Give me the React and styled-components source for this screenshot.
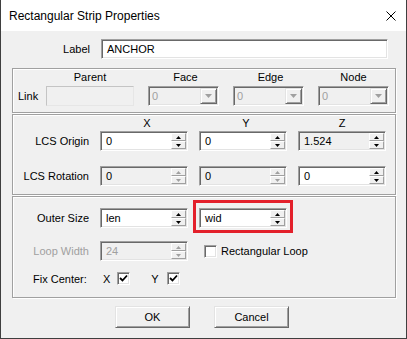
import React from "react";
import styled, { createGlobalStyle } from "styled-components";

const GlobalStyle = createGlobalStyle`
  html, body { margin: 0; padding: 0; background: #ffffff; }
  body { font-family: "Liberation Sans", Arial, sans-serif; font-size: 11px; color: #000; }
  * { box-sizing: border-box; }
`;

const Window = styled.div`
  width: 407px;
  height: 339px;
  border: 1px solid #3f3f3f;
  border-top: 0;
  background: #f0f0f0;
  display: flex;
  flex-direction: column;
`;

const TitleBar = styled.div`
  height: 31px;
  flex-shrink: 0;
  background: #ffffff;
  display: flex;
  align-items: center;
  justify-content: space-between;
  padding: 0 10px 0 8px;
  font-size: 12px;
`;

const Body = styled.div`
  padding: 8px 10px 0 11px;
  display: flex;
  flex-direction: column;
`;

const Row = styled.div`
  display: flex;
  align-items: center;
  margin-top: ${(p) => p.$mt || 0}px;
  padding-left: ${(p) => p.$pl || 0}px;
`;

const Caption = styled.div`
  width: ${(p) => p.$w}px;
  flex-shrink: 0;
  text-align: right;
  margin-right: ${(p) => p.$mr || 0}px;
  color: ${(p) => (p.$disabled ? "#a0a0a0" : "#000")};
  white-space: nowrap;
`;

const Sunken = styled.div`
  width: ${(p) => p.$w}px;
  height: 20px;
  flex-shrink: 0;
  border: 1px solid;
  border-color: #a0a0a0 #ffffff #ffffff #a0a0a0;
  box-shadow: inset 1px 1px 0 #696969, inset -1px -1px 0 #e3e3e3;
  background: ${(p) => (p.$gray ? "#f0f0f0" : "#ffffff")};
  color: ${(p) => (p.$dim ? "#a0a0a0" : "#000")};
  display: flex;
  align-items: stretch;
  padding: 1px;
`;

const Value = styled.div`
  flex: 1;
  display: flex;
  align-items: center;
  padding-left: ${(p) => p.$pl || 4}px;
  white-space: nowrap;
  overflow: hidden;
`;

const SpinCol = styled.div`
  width: 15px;
  display: flex;
  flex-direction: column;
`;

const SpinBtn = styled.div`
  height: 8px;
  background: #f0f0f0;
  border: 1px solid;
  border-color: #ffffff #a0a0a0 #a0a0a0 #ffffff;
  display: flex;
  align-items: center;
  justify-content: center;
`;

const DropBtn = styled.div`
  width: 17px;
  background: #f0f0f0;
  border: 1px solid;
  border-color: #e3e3e3 #696969 #696969 #e3e3e3;
  box-shadow: inset 1px 1px 0 #ffffff, inset -1px -1px 0 #a0a0a0;
  display: flex;
  align-items: center;
  justify-content: center;
`;

const FlatBox = styled.div`
  width: ${(p) => p.$w}px;
  height: 20px;
  border: 1px solid;
  border-color: #c4c4c4 #e6e6e6 #e6e6e6 #c4c4c4;
  background: #f0f0f0;
`;

const Group = styled.div`
  border: 1px solid #a0a0a0;
  box-shadow: inset 1px 1px 0 #ffffff, 1px 1px 0 #ffffff;
  margin-top: ${(p) => p.$mt || 0}px;
  padding: ${(p) => p.$pad};
  display: flex;
  flex-direction: column;
`;

const LinkRow = styled.div`
  display: flex;
  align-items: flex-end;
  padding-left: 5px;
`;

const LinkLabel = styled.div`
  width: 28px;
  line-height: 20px;
`;

const Field = styled.div`
  display: flex;
  flex-direction: column;
  align-items: center;
  gap: 2px;
  margin-left: ${(p) => p.$ml || 0}px;
`;

const Header = styled.div`
  line-height: 13px;
  text-align: center;
  padding-left: ${(p) => p.$shift || 0}px;
`;

const Grid = styled.div`
  display: grid;
  grid-template-columns: 76px 88px 88px 88px;
  column-gap: 11px;
  align-items: center;
  margin-top: ${(p) => p.$mt || 0}px;
`;

const CheckWrap = styled.label`
  display: inline-flex;
  align-items: center;
  gap: ${(p) => p.$gap || 4}px;
  margin-left: ${(p) => p.$ml || 0}px;
  white-space: nowrap;
`;

const Box = styled.span`
  width: 13px;
  height: 13px;
  flex-shrink: 0;
  border: 1px solid;
  border-color: #a0a0a0 #ffffff #ffffff #a0a0a0;
  box-shadow: inset 1px 1px 0 #696969, inset -1px -1px 0 #e3e3e3;
  background: #ffffff;
  display: flex;
  align-items: center;
  justify-content: center;
`;

const FixLabel = styled.div`
  width: 70px;
`;

const Highlight = styled.div`
  position: relative;
`;

const RedFrame = styled.div`
  position: absolute;
  top: -8px;
  left: -6px;
  right: -6px;
  bottom: -5px;
  border: 3px solid #e3202b;
  pointer-events: none;
`;

const ButtonRow = styled.div`
  display: flex;
  justify-content: center;
  gap: 24px;
  margin-top: 8px;
  padding-right: 4px;
`;

const Button = styled.div`
  width: 75px;
  height: 22px;
  background: #f0f0f0;
  border: 1px solid;
  border-color: #e3e3e3 #696969 #696969 #e3e3e3;
  box-shadow: inset 1px 1px 0 #ffffff, inset -1px -1px 0 #a0a0a0;
  display: flex;
  align-items: center;
  justify-content: center;
`;

const Tri = ({ up, color }) => (
  <svg width="5" height="3" viewBox="0 0 5 3">
    <polygon points={up ? "2.5,0 5,3 0,3" : "0,0 5,0 2.5,3"} fill={color} />
  </svg>
);

const Spin = ({ value, w = 88, gray, dim, arrowsDim }) => {
  const c = arrowsDim ? "#a0a0a0" : "#000";
  return (
    <Sunken $w={w} $gray={gray} $dim={dim}>
      <Value>{value}</Value>
      <SpinCol>
        <SpinBtn>
          <Tri up color={c} />
        </SpinBtn>
        <SpinBtn>
          <Tri color={c} />
        </SpinBtn>
      </SpinCol>
    </Sunken>
  );
};

const Combo = ({ value }) => (
  <Sunken $w={71} $gray $dim>
    <Value $pl={2}>{value}</Value>
    <DropBtn>
      <svg width="7" height="4" viewBox="0 0 7 4">
        <polygon points="0,0 7,0 3.5,4" fill="#a0a0a0" />
      </svg>
    </DropBtn>
  </Sunken>
);

const Check = ({ checked }) => (
  <Box>
    {checked && (
      <svg width="9" height="9" viewBox="0 0 9 9">
        <polyline points="1,4 3.5,6.5 8,1.5" fill="none" stroke="#000" strokeWidth="1.8" />
      </svg>
    )}
  </Box>
);

export default function App() {
  return (
    <>
      <GlobalStyle />
      <Window>
        <TitleBar>
          <span>Rectangular Strip Properties</span>
          <svg width="10" height="10" viewBox="0 0 10 10">
            <path d="M0.5 0.5 L9.5 9.5 M9.5 0.5 L0.5 9.5" stroke="#000" strokeWidth="1" />
          </svg>
        </TitleBar>
        <Body>
          <Row $pl={1}>
            <Caption $w={77} $mr={11}>Label</Caption>
            <Sunken $w={287}>
              <Value>ANCHOR</Value>
            </Sunken>
          </Row>

          <Group $mt={9} $pad="2px 0 6px 0">
            <LinkRow>
              <LinkLabel>Link</LinkLabel>
              <Field>
                <Header>Parent</Header>
                <FlatBox $w={88} />
              </Field>
              <Field $ml={14}>
                <Header $shift={4}>Face</Header>
                <Combo value="0" />
              </Field>
              <Field $ml={14}>
                <Header $shift={4}>Edge</Header>
                <Combo value="0" />
              </Field>
              <Field $ml={14}>
                <Header>Node</Header>
                <Combo value="0" />
              </Field>
            </LinkRow>
          </Group>

          <Group $mt={1} $pad="2px 0 8px 0">
            <Grid>
              <span />
              <Header $shift={6}>X</Header>
              <Header $shift={6}>Y</Header>
              <Header>Z</Header>
            </Grid>
            <Grid $mt={1}>
              <Caption $w={76}>LCS Origin</Caption>
              <Spin value="0" />
              <Spin value="0" />
              <Spin value="1.524" gray />
            </Grid>
            <Grid $mt={15}>
              <Caption $w={76}>LCS Rotation</Caption>
              <Spin value="0" gray arrowsDim />
              <Spin value="0" gray arrowsDim />
              <Spin value="0" />
            </Grid>
          </Group>

          <Group $mt={1} $pad="11px 0 12px 0">
            <Grid>
              <Caption $w={76}>Outer Size</Caption>
              <Spin value="len" />
              <Highlight>
                <Spin value="wid" />
                <RedFrame />
              </Highlight>
            </Grid>
            <Grid $mt={13}>
              <Caption $w={76} $disabled>Loop Width</Caption>
              <Spin value="24" gray dim arrowsDim />
              <CheckWrap $ml={5}>
                <Check />
                <span>Rectangular Loop</span>
              </CheckWrap>
            </Grid>
            <Row $mt={11} $pl={20}>
              <FixLabel>Fix Center:</FixLabel>
              <CheckWrap $gap={7}>
                <span>X</span>
                <Check checked />
              </CheckWrap>
              <CheckWrap $gap={8} $ml={21}>
                <span>Y</span>
                <Check checked />
              </CheckWrap>
            </Row>
          </Group>

          <ButtonRow>
            <Button>OK</Button>
            <Button>Cancel</Button>
          </ButtonRow>
        </Body>
      </Window>
    </>
  );
}
